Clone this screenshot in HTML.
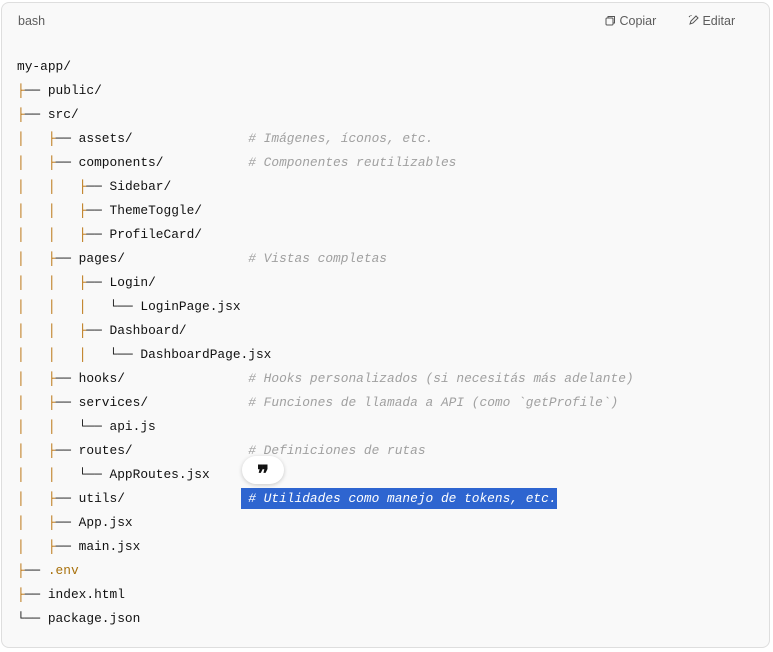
<!DOCTYPE html>
<html><head><meta charset="utf-8"><style>
body{margin:0;background:#fff;width:773px;height:652px;overflow:hidden;font-family:"Liberation Sans",sans-serif}
.box{position:absolute;left:1px;top:2px;width:767px;height:644px;border:1px solid #dedede;border-radius:8px;background:#f9f9f9}
.hdr{position:absolute;top:14px;font-size:12.5px;color:#5d5d5d}
pre{position:absolute;left:17px;top:55px;margin:0;font-family:"Liberation Mono","DejaVu Sans Mono",monospace;font-size:12.85px;line-height:24px;color:#111}
.o{color:#b76b01}
.c{color:#a0a0a0;font-style:italic}
.sel{background:#2e65d0;color:#fff;font-style:italic;padding:3px 0}
.y{color:#a8710c}
.q{position:absolute;left:242px;top:456px;width:42px;height:28px;background:#fff;border-radius:14px;box-shadow:0 1px 4px rgba(0,0,0,.2);font:bold 22px "Liberation Serif",serif;text-align:center;line-height:36px;color:#111}
</style></head><body>
<div class="box"></div>
<div class="hdr" style="left:18px">bash</div>
<div class="hdr" style="left:605px"><svg width="11" height="11" viewBox="0 0 11 11" style="vertical-align:-1px"><rect x="1" y="3" width="7" height="7" rx="1" fill="none" stroke="#555"/><path d="M3 3V1.5h6.5V8H8" fill="none" stroke="#555"/></svg> Copiar</div>
<div class="hdr" style="left:688px"><svg width="11" height="11" viewBox="0 0 11 11" style="vertical-align:-1px"><path d="M2 9l1-3 5-5 2 2-5 5z" fill="none" stroke="#555"/><path d="M1 1l1 1M3 0v1" stroke="#555"/></svg> Editar</div>
<pre>my-app/
<span class="o">├</span>── public/
<span class="o">├</span>── src/
<span class="o">│</span>   <span class="o">├</span>── assets/               <span class="c"># Imágenes, íconos, etc.</span>
<span class="o">│</span>   <span class="o">├</span>── components/           <span class="c"># Componentes reutilizables</span>
<span class="o">│</span>   <span class="o">│</span>   <span class="o">├</span>── Sidebar/
<span class="o">│</span>   <span class="o">│</span>   <span class="o">├</span>── ThemeToggle/
<span class="o">│</span>   <span class="o">│</span>   <span class="o">├</span>── ProfileCard/
<span class="o">│</span>   <span class="o">├</span>── pages/                <span class="c"># Vistas completas</span>
<span class="o">│</span>   <span class="o">│</span>   <span class="o">├</span>── Login/
<span class="o">│</span>   <span class="o">│</span>   <span class="o">│</span>   └── LoginPage.jsx
<span class="o">│</span>   <span class="o">│</span>   <span class="o">├</span>── Dashboard/
<span class="o">│</span>   <span class="o">│</span>   <span class="o">│</span>   └── DashboardPage.jsx
<span class="o">│</span>   <span class="o">├</span>── hooks/                <span class="c"># Hooks personalizados (si necesitás más adelante)</span>
<span class="o">│</span>   <span class="o">├</span>── services/             <span class="c"># Funciones de llamada a API (como `getProfile`)</span>
<span class="o">│</span>   <span class="o">│</span>   └── api.js
<span class="o">│</span>   <span class="o">├</span>── routes/               <span class="c"># Definiciones de rutas</span>
<span class="o">│</span>   <span class="o">│</span>   └── AppRoutes.jsx
<span class="o">│</span>   <span class="o">├</span>── utils/               <span class="sel"> # Utilidades como manejo de tokens, etc.</span>
<span class="o">│</span>   <span class="o">├</span>── App.jsx
<span class="o">│</span>   <span class="o">├</span>── main.jsx
<span class="o">├</span>── <span class="y">.env</span>
<span class="o">├</span>── index.html
└── package.json</pre>
<div class="q">❞</div>
</body></html>
